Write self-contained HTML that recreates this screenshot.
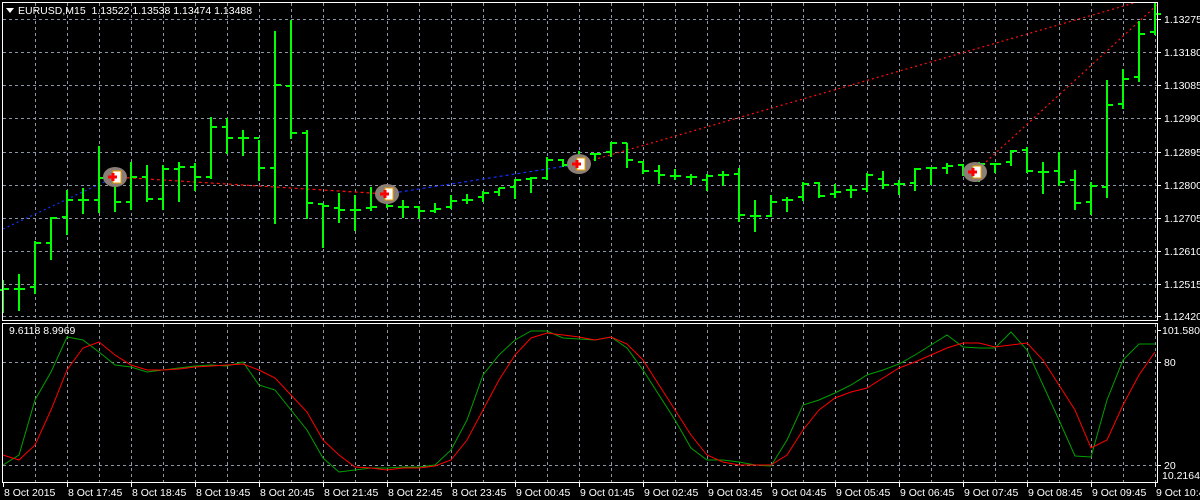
<!DOCTYPE html>
<html><head><meta charset="utf-8"><style>
html,body{margin:0;padding:0;background:#000;width:1200px;height:500px;overflow:hidden}
svg text{font-family:"Liberation Sans",sans-serif;font-size:10.5px;fill:#fff}
</style></head><body>
<svg id="s" width="1200" height="500" xmlns="http://www.w3.org/2000/svg"></svg>
<script>
var S=document.getElementById('s'),h='';
function L(x1,y1,x2,y2,c,w,d){h+='<line x1="'+x1+'" y1="'+y1+'" x2="'+x2+'" y2="'+y2+'" stroke="'+c+'" stroke-width="'+(w||1)+'"'+(d?' stroke-dasharray="'+d+'"':'')+'/>';}
function T(x,y,t,a){h+='<text x="'+x+'" y="'+y+'"'+(a?' text-anchor="'+a+'"':'')+'>'+t+'</text>';}
var g='#8c96a6';
for(var x=35;x<1157;x+=32){L(x+.5,3,x+.5,320,g,1,'3,3');L(x+.5,324,x+.5,482,g,1,'3,3');}
var py=[19,52,85,118,152,185,218,251,284,316],pl=['1.13275','1.13180','1.13085','1.12990','1.12895','1.12800','1.12705','1.12610','1.12515','1.12420'];
for(var i=0;i<py.length;i++){L(3,py[i]+.5,1157,py[i]+.5,g,1,'3,3');L(1157,py[i]+.5,1161,py[i]+.5,'#fff');T(1164,py[i]+4,pl[i]);}
L(3,362.5,1157,362.5,g,1,'3,3');L(3,465.5,1157,465.5,g,1,'3,3');
var B=[[280,312,290,289],[274,310,289,289],[241,293,287,243],[217,259,243,218],[190,234,217,200],[188,213,200,200],[146,212,200,178],[175,211,178,202],[162,209,202,177],[165,201,177,199],[165,209,199,169],[162,201,169,167],[163,190,167,177],[117,178,177,127],[118,153,127,138],[130,155,138,138],[140,180,138,168],[31,223,168,85],[20,138,86,133],[130,218,133,203],[204,247,204,206],[193,222,208,210],[195,230,210,210],[187,210,208,207],[186,207,197,206],[200,217,207,207],[206,218,207,211],[203,212,211,209],[195,208,207,201],[194,203,200,200],[191,201,197,193],[188,195,192,188],[179,198,187,180],[177,192,179,178],[157,179,178,160],[159,166,160,165],[151,167,165,157],[153,160,154,154],[142,156,152,143],[143,167,143,160],[161,173,162,171],[165,183,171,175],[169,179,176,176],[174,184,177,177],[174,190,180,176],[171,185,175,175],[168,221,174,215],[200,231,216,216],[195,216,216,202],[197,211,200,200],[182,200,197,184],[182,197,183,196],[184,197,194,192],[185,197,190,190],[173,191,189,175],[171,188,179,185],[180,194,184,184],[168,190,183,169],[167,184,168,168],[163,173,168,166],[164,175,165,172],[162,181,173,164],[163,172,164,164],[150,165,162,151],[147,172,150,171],[162,193,172,172],[152,185,171,182],[170,209,180,203],[182,214,202,186],[80,197,187,105],[69,108,104,79],[21,81,77,34],[3,34,32,14]];
L(3,229,115,177,'#1030ff',1.2,'2,3');L(115,177,387,194,'#ff1010',1.2,'3,3');L(387,194,579,164,'#1030ff',1.2,'3,3');L(579,164,1134,3,'#ff1010',1.2,'2,3');L(975,172,1157,5,'#ff1010',1.2,'2,3');
for(var i=0;i<B.length;i++){var x=3+16*i,b=B[i],c='#00ff00';
L(x,b[0],x,b[1]+1,c,2);L(x-5,b[2],x,b[2],c,2);L(x,b[3],x+6,b[3],c,2);}
[[115,177],[387,194],[579,164],[975,172]].forEach(function(p){h+='<ellipse cx="'+p[0]+'" cy="'+p[1]+'" rx="12" ry="10" fill="#8a7e76"/>';
h+='<path d="M'+(p[0]-2)+' '+(p[1]-6)+'L'+(p[0]+6)+' '+(p[1]-6)+'L'+(p[0]+6)+' '+(p[1]+6)+'L'+(p[0]-2)+' '+(p[1]+6)+'Z" fill="#fff" stroke="#e8a000"/>';
h+='<path d="M'+(p[0]-7)+' '+p[1]+'h9M'+(p[0]-2)+' '+(p[1]-4)+'v8" stroke="#ff0000" stroke-width="3"/>';});
var G=[465,455,400,372,337,340,352,365,367,372,370,368,366,365,366,362,385,390,410,430,458,472,470,468,468,467,467,465,450,420,375,355,340,331,331,338,339,340,337,348,370,395,420,448,460,460,462,465,466,440,405,400,393,385,375,370,364,355,345,335,347,348,348,332,350,385,420,456,457,400,360,344,344];
var R=[455,460,445,410,370,348,342,355,365,370,370,369,367,366,365,364,370,378,395,412,440,455,467,468,470,468,468,466,460,440,410,380,355,338,333,335,337,340,337,344,360,385,410,435,455,462,465,465,465,455,430,410,398,392,388,378,368,362,355,348,343,343,347,345,343,360,385,410,448,440,405,375,352];
function P(a,c){var s='';a.forEach(function(v,i){s+=(i?'L':'M')+(3+16*i)+' '+v;});h+='<path d="'+s+'" fill="none" stroke="'+c+'" stroke-width="1"/>';}
P(G,'#00a000');P(R,'#ff0000');
h+='<rect x="2.5" y="2.5" width="1155" height="318" fill="none" stroke="#fff"/>';
h+='<rect x="2.5" y="323.5" width="1155" height="159" fill="none" stroke="#fff"/>';
L(1161,330.5,1157,330.5,'#fff');L(1161,362.5,1157,362.5,'#fff');L(1161,465.5,1157,465.5,'#fff');
T(1162,334,'101.5806');T(1164,366,'80');T(1164,469,'20');T(1162,479,'10.2164');
T(9,334,'9.6118 8.9969');
h+='<path d="M6 8h8l-4 5z" fill="#fff"/>';T(18,14,'EURUSD,M15&#160; 1.13522 1.13538 1.13474 1.13488');
var tl=['8 Oct 2015','8 Oct 17:45','8 Oct 18:45','8 Oct 19:45','8 Oct 20:45','8 Oct 21:45','8 Oct 22:45','8 Oct 23:45','9 Oct 00:45','9 Oct 01:45','9 Oct 02:45','9 Oct 03:45','9 Oct 04:45','9 Oct 05:45','9 Oct 06:45','9 Oct 07:45','9 Oct 08:45','9 Oct 09:45','9 Oct 10:45'];
for(var i=0;i<tl.length;i++){var x=3+64*i;L(x+.5,483,x+.5,487,'#fff');T(x+1,496,tl[i]);}
S.innerHTML=h;
</script>
</body></html>
